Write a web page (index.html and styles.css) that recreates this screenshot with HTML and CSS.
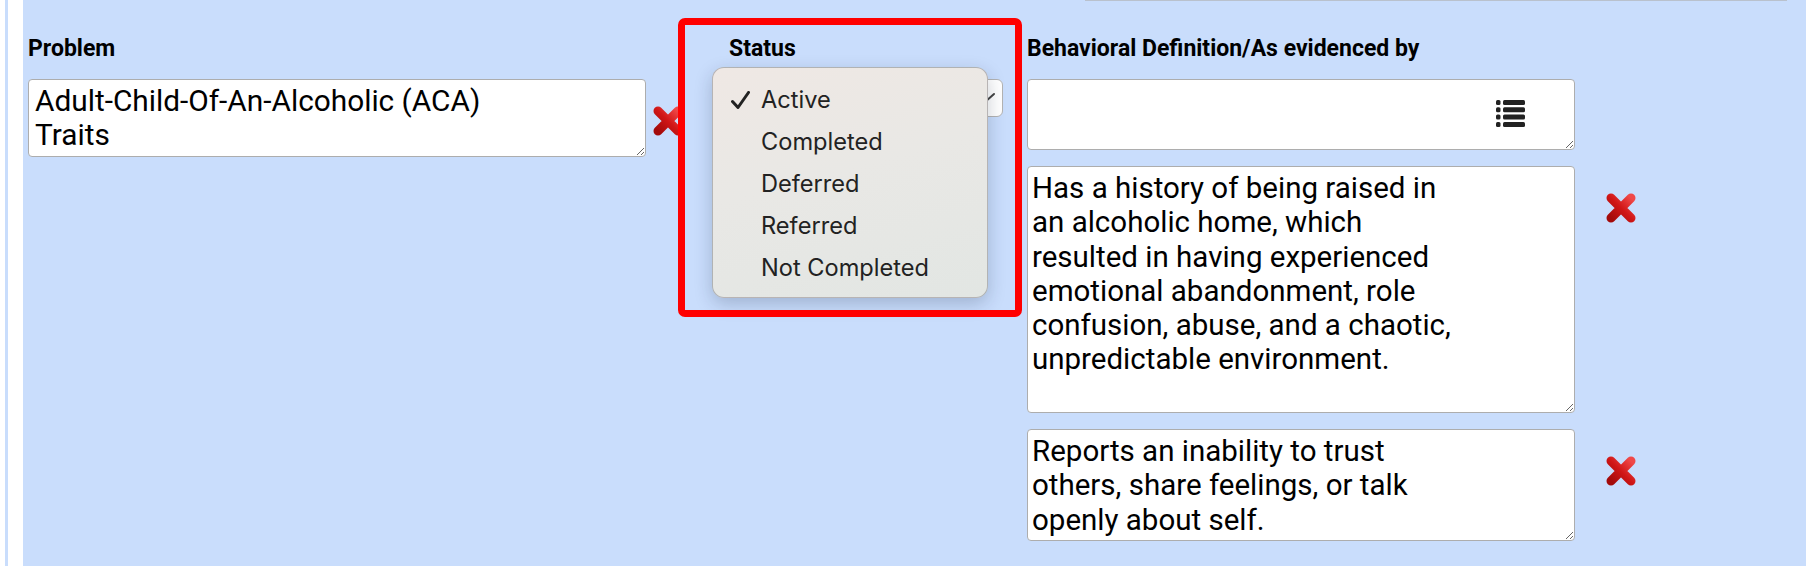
FILE: index.html
```
<!DOCTYPE html>
<html lang="en">
<head>
  <meta charset="UTF-8" />
  <meta name="viewport" content="width=device-width, initial-scale=1.0"/>
  <title>Treatment Plan - Problem</title>
  <link rel="stylesheet" href="styles.css">
</head>
<body>
  <div class="page">
    <div class="rail"></div>

    <div class="panel">
      <div class="top-edge"></div>

      <div class="goal-row">
        <div class="problem-col">
          <label class="field-label">Problem</label>
          <div class="entry">
            <textarea class="field problem-text">Adult-Child-Of-An-Alcoholic (ACA)
Traits</textarea>
            <span class="remove">
              <svg viewBox="0 0 34 34" width="34" height="34"><use href="#x-icon"/></svg>
            </span>
          </div>
        </div>

        <div class="status-col">
          <label class="field-label">Status</label>
          <div class="select-wrap">
            <!-- the open menu covers the current value -->
            <div class="select-box">
              <svg class="chevron" viewBox="0 0 22 12" width="22" height="12">
                <path d="M2 2 L11 10 L20 2" fill="none" stroke="#444" stroke-width="2" stroke-linecap="round" stroke-linejoin="round"/>
              </svg>
            </div>

            <ul class="status-menu">
              <li>
                <svg class="check" viewBox="0 0 19 18" width="19" height="18">
                  <path d="M1.5 10.5 L7 16.5 L17.5 1.5" fill="none" stroke="#222" stroke-width="3" stroke-linecap="round" stroke-linejoin="round"/>
                </svg>
                <span>Active</span>
              </li>
              <li><span class="check"></span><span>Completed</span></li>
              <li><span class="check"></span><span>Deferred</span></li>
              <li><span class="check"></span><span>Referred</span></li>
              <li><span class="check"></span><span>Not Completed</span></li>
            </ul>
          </div>
        </div>

        <div class="behavior-col">
          <label class="field-label">Behavioral Definition/As evidenced by</label>

          <div class="entry">
            <div class="picker">
              <textarea class="field behavior-text picker-text"></textarea>
              <svg class="picker-icon" viewBox="0 0 29 27" width="29" height="27">
                <g fill="#222">
                  <rect x="0" y="0" width="4.5" height="5" rx="1.5"/>
                  <rect x="7" y="0" width="22" height="5" rx="1.5"/>
                  <rect x="0" y="7.3" width="4.5" height="5" rx="1.5"/>
                  <rect x="7" y="7.3" width="22" height="5" rx="1.5"/>
                  <rect x="0" y="14.6" width="4.5" height="5" rx="1.5"/>
                  <rect x="7" y="14.6" width="22" height="5" rx="1.5"/>
                  <rect x="0" y="22" width="4.5" height="5" rx="1.5"/>
                  <rect x="7" y="22" width="22" height="5" rx="1.5"/>
                </g>
              </svg>
            </div>
          </div>

          <div class="entry">
            <textarea class="field behavior-text history-text">Has a history of being raised in
an alcoholic home, which
resulted in having experienced
emotional abandonment, role
confusion, abuse, and a chaotic,
unpredictable environment.</textarea>
            <span class="remove wide">
              <svg viewBox="0 0 34 34" width="34" height="34"><use href="#x-icon"/></svg>
            </span>
          </div>

          <div class="entry">
            <textarea class="field behavior-text trust-text">Reports an inability to trust
others, share feelings, or talk
openly about self.</textarea>
            <span class="remove wide">
              <svg viewBox="0 0 34 34" width="34" height="34"><use href="#x-icon"/></svg>
            </span>
          </div>
        </div>
      </div>

      <div class="highlight"></div>
    </div>
  </div>

  <!-- shared delete icon -->
  <svg width="0" height="0" class="defs">
    <defs>
      <linearGradient id="x-fill" x1="1" y1="0" x2="0" y2="1">
        <stop offset="0" stop-color="#f04848"/>
        <stop offset="0.5" stop-color="#d01616"/>
        <stop offset="1" stop-color="#a30a0a"/>
      </linearGradient>
      <g id="x-icon">
        <path d="M7 7 L27 27 M27 7 L7 27" fill="none" stroke="url(#x-fill)" stroke-width="9" stroke-linecap="round"/>
      </g>
    </defs>
  </svg>
</body>
</html>
```

FILE: styles.css
```
body {
  margin: 0;
  background: #fff;
  font-family: Roboto, "Liberation Sans", sans-serif;
  color: #000;
}
.defs {
  position: absolute;
}
.page {
  display: flex;
  height: 566px;
  padding-left: 5px;
  overflow: hidden;
}
.rail {
  width: 3px;
  margin-right: 15px;
  background: #c9ddfc;
}
.panel {
  position: relative;
  flex: 1;
  background: #c9ddfc;
}
.top-edge {
  width: 702px;
  height: 1px;
  margin-left: 1062px;
  background: #b9c1cd;
}
.goal-row {
  display: flex;
  align-items: flex-start;
  padding: 34px 0 0 5px;
}

.field-label {
  display: block;
  font-size: 23px;
  font-weight: 700;
  line-height: 28px;
  margin-bottom: 16px;
}

.entry {
  display: flex;
  align-items: flex-start;
}
.entry + .entry {
  margin-top: 16px;
}
.field {
  display: block;
  box-sizing: border-box;
  margin: 0;
  padding: 4px 4px 2px;
  border: 1px solid #adadad;
  border-radius: 4px;
  background: #fff;
  color: #000;
  font-family: Roboto, "Liberation Sans", sans-serif;
  font-size: 29.5px;
  line-height: 34.3px;
  overflow: hidden;
}
.remove {
  flex: none;
  width: 34px;
  height: 34px;
  margin: 25px 0 0 5px;
}
.remove.wide {
  margin-left: 29px;
}
.remove svg {
  display: block;
}

/* problem */
.problem-col {
  width: 657px;
  flex: none;
}
.problem-text {
  width: 618px;
  height: 78px;
  padding-left: 6px;
  font-size: 29.8px;
}

/* status */
.status-col {
  width: 274px;
  flex: none;
  margin-left: 44px;
}
.select-wrap {
  position: relative;
}
.select-box {
  display: flex;
  align-items: center;
  justify-content: flex-end;
  box-sizing: border-box;
  height: 38px;
  padding: 0 6px 0 10px;
  border: 1px solid #b3b3b3;
  border-radius: 6px;
  background: #fff;
}
.status-menu {
  position: absolute;
  z-index: 2;
  left: -17px;
  top: -12px;
  width: 276px;
  height: 231px;
  box-sizing: border-box;
  margin: 0;
  padding: 11px 0 0;
  list-style: none;
  border: 1px solid rgba(60, 60, 70, 0.3);
  border-radius: 12px;
  background: linear-gradient(165deg, #efe8e4 0%, #e9e8e5 45%, #e2e6e3 100%);
  box-shadow: 0 6px 18px rgba(20, 30, 60, 0.22);
  font-family: Inter, "Noto Sans", sans-serif;
  font-size: 23.6px;
  line-height: 42px;
  color: #222;
}
.status-menu li {
  display: flex;
  align-items: center;
  padding-left: 18px;
}
.status-menu .check {
  flex: none;
  width: 19px;
  height: 18px;
  margin-right: 11px;
}

/* behavioral definitions */
.behavior-col {
  flex: none;
  margin-left: 24px;
}
.behavior-text {
  width: 548px;
}
.picker {
  position: relative;
}
.picker-text {
  height: 71px;
}
.picker-icon {
  position: absolute;
  top: 21px;
  right: 50px;
}
.history-text {
  height: 247px;
}
.trust-text {
  height: 112px;
}

/* annotation frame */
.highlight {
  position: absolute;
  z-index: 3;
  left: 655px;
  top: 18px;
  width: 344px;
  height: 299px;
  box-sizing: border-box;
  border: 7px solid #ff0000;
  border-radius: 7px;
  pointer-events: none;
}
```
